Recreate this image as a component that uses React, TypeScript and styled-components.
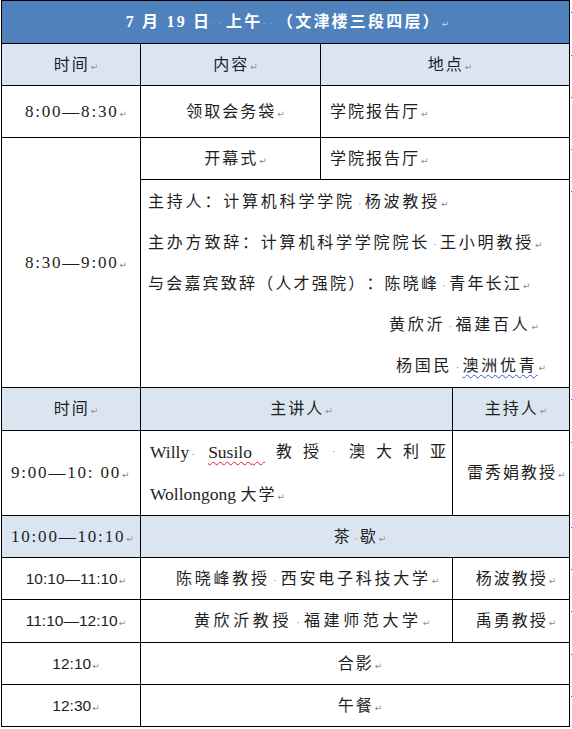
import styled, { createGlobalStyle } from 'styled-components';

const GlobalStyle = createGlobalStyle`
  html, body {
    margin: 0;
    padding: 0;
    background: #fff;
  }
  body {
    font-family: "Noto Sans CJK SC", sans-serif;
  }
`;

const Page = styled.div`
  padding-left: 1px;
`;

const Schedule = styled.table`
  width: 568px;
  table-layout: fixed;
  border-collapse: collapse;
  color: #1e1e1e;
  font-family: "Liberation Serif", "Noto Sans CJK SC", serif;
  font-size: 16px;
  letter-spacing: 2px;
  text-spacing-trim: space-all;
`;

const Row = styled.tr<{ $h: number }>`
  height: ${(p) => p.$h}px;
`;

type Tone = 'plain' | 'shade' | 'title';
type Align = 'left' | 'center' | 'right';

const tones: Record<Tone, string> = {
  plain: '#ffffff',
  shade: '#dbe5f1',
  title: '#4f81bd',
};

const Cell = styled.td<{
  $tone?: Tone;
  $align?: Align;
  $pl?: number;
  $pr?: number;
  $ls?: number;
}>`
  position: relative;
  border: 1px solid #000;
  padding: 0 ${(p) => p.$pr ?? 4}px 0 ${(p) => p.$pl ?? 14}px;
  background: ${(p) => tones[p.$tone ?? 'plain']};
  text-align: ${(p) => p.$align ?? 'center'};
  vertical-align: middle;
  white-space: nowrap;
  line-height: 20px;
  letter-spacing: ${(p) => p.$ls ?? 2}px;

  tr > &:last-child::after {
    content: '';
    position: absolute;
    right: -4px;
    top: 11px;
    width: 2px;
    height: 1px;
    background: #666;
  }
`;

const Title = styled.span`
  color: #fff;
  font-weight: bold;
  font-size: 16px;
  letter-spacing: 2.2px;
`;

const TitleGap = styled.span`
  color: #9db3d6;
  font-weight: normal;
  letter-spacing: 4px;
  font-size: 10px;
  line-height: 1;
`;

const Mark = styled.span<{ $light?: boolean }>`
  font-family: "DejaVu Sans", sans-serif;
  font-size: 9px;
  font-weight: normal;
  line-height: 1;
  letter-spacing: 0;
  color: ${(p) => (p.$light ? '#c4d2e8' : '#8c8c8c')};
  margin-left: 1px;
`;

const Dot = styled.span<{ $w?: number }>`
  display: inline-block;
  width: ${(p) => p.$w ?? 8}px;
  text-align: center;
  font-size: 10px;
  line-height: 1;
  color: #777;
  letter-spacing: 0;
`;

const Time = styled.span<{ $face?: 'serif' | 'sans' }>`
  font-family: ${(p) =>
    p.$face === 'sans' ? '"Liberation Sans", sans-serif' : '"Liberation Serif", serif'};
  font-size: ${(p) => (p.$face === 'sans' ? 15.5 : 17)}px;
  letter-spacing: ${(p) => (p.$face === 'sans' ? 0 : 1.8)}px;
`;

const Line = styled.div<{ $indent?: number; $h?: number; $ls?: number }>`
  height: ${(p) => p.$h ?? 41}px;
  line-height: ${(p) => p.$h ?? 41}px;
  padding-left: ${(p) => p.$indent ?? 0}px;
  letter-spacing: ${(p) => p.$ls ?? 2.8}px;
`;

const Spread = styled.div`
  display: flex;
  justify-content: space-between;
  align-items: center;
  height: 42px;
  letter-spacing: 0;
`;

const Latin = styled.span`
  font-family: "Liberation Serif", serif;
  font-size: 17.5px;
  letter-spacing: 0;
`;

const Squiggle = styled.span<{ $color: string }>`
  text-decoration: underline wavy ${(p) => p.$color};
  text-decoration-thickness: 1px;
  text-underline-offset: 3px;
`;

const P = ({ light }: { light?: boolean }) => <Mark $light={light}>↵</Mark>;
const S = ({ w }: { w?: number }) => <Dot $w={w}>·</Dot>;

export default function App() {
  return (
    <Page>
      <GlobalStyle />
      <Schedule>
        <colgroup>
          <col style={{ width: 139 }} />
          <col style={{ width: 180 }} />
          <col style={{ width: 132 }} />
          <col style={{ width: 117 }} />
        </colgroup>
        <tbody>
          <Row $h={43}>
            <Cell colSpan={4} $tone="title" $pl={8}>
              <Title>
                7 月 19 日<TitleGap>··</TitleGap>上午<TitleGap>··</TitleGap>（文津楼三段四层）
                <P light />
              </Title>
            </Cell>
          </Row>
          <Row $h={42}>
            <Cell $tone="shade">
              时间<P />
            </Cell>
            <Cell $tone="shade">
              内容<P />
            </Cell>
            <Cell colSpan={2} $tone="shade">
              地点<P />
            </Cell>
          </Row>
          <Row $h={52}>
            <Cell>
              <Time>8:00—8:30</Time>
              <P />
            </Cell>
            <Cell>
              领取会务袋<P />
            </Cell>
            <Cell colSpan={2} $align="left" $pl={9}>
              学院报告厅<P />
            </Cell>
          </Row>
          <Row $h={42}>
            <Cell rowSpan={2}>
              <Time>8:30—9:00</Time>
              <P />
            </Cell>
            <Cell>
              开幕式<P />
            </Cell>
            <Cell colSpan={2} $align="left" $pl={9}>
              学院报告厅<P />
            </Cell>
          </Row>
          <Row $h={208}>
            <Cell colSpan={3} $align="left" $pl={7}>
              <Line>
                主持人：计算机科学学院<S w={10} />杨波教授<P />
              </Line>
              <Line>
                主办方致辞：计算机科学学院院长<S w={10} />王小明教授<P />
              </Line>
              <Line $ls={2.2}>
                与会嘉宾致辞（人才强院）：陈晓峰<S w={10} />青年长江<P />
              </Line>
              <Line $indent={241}>
                黄欣沂<S w={10} />福建百人<P />
              </Line>
              <Line $indent={248}>
                杨国民<S w={10} />
                <Squiggle $color="#3a55d8">澳洲优青</Squiggle>
                <P />
              </Line>
            </Cell>
          </Row>
          <Row $h={43}>
            <Cell $tone="shade">
              时间<P />
            </Cell>
            <Cell colSpan={2} $tone="shade">
              主讲人<P />
            </Cell>
            <Cell $tone="shade">
              主持人<P />
            </Cell>
          </Row>
          <Row $h={84}>
            <Cell $align="left" $pl={9}>
              <Time>9:00—10: 00</Time>
              <P />
            </Cell>
            <Cell colSpan={2} $align="left" $pl={9} $pr={6}>
              <Spread>
                <Latin>
                  Willy<S />
                </Latin>
                <Latin>
                  <Squiggle $color="#e02020">Susilo{'\u00a0\u00a0\u00a0'}</Squiggle>
                </Latin>
                <span>教</span>
                <span>授</span>
                <S />
                <span>澳</span>
                <span>大</span>
                <span>利</span>
                <span>亚</span>
              </Spread>
              <Line $h={42} $ls={2}>
                <Latin>Wollongong </Latin>大学<P />
              </Line>
            </Cell>
            <Cell>
              雷秀娟教授<P />
            </Cell>
          </Row>
          <Row $h={42}>
            <Cell $tone="shade" $align="left" $pl={9}>
              <Time>10:00—10:10</Time>
              <P />
            </Cell>
            <Cell colSpan={3} $tone="shade">
              茶<S />歇<P />
            </Cell>
          </Row>
          <Row $h={42}>
            <Cell>
              <Time $face="sans">10:10—11:10</Time>
              <P />
            </Cell>
            <Cell colSpan={2} $align="left" $pl={35} $ls={2.75}>
              陈晓峰教授<S w={11} />西安电子科技大学<P />
            </Cell>
            <Cell>
              杨波教授<P />
            </Cell>
          </Row>
          <Row $h={43}>
            <Cell>
              <Time $face="sans">11:10—12:10</Time>
              <P />
            </Cell>
            <Cell colSpan={2} $align="left" $pl={53} $ls={3.6}>
              黄欣沂教授<S w={12} />福建师范大学<P />
            </Cell>
            <Cell>
              禹勇教授<P />
            </Cell>
          </Row>
          <Row $h={42}>
            <Cell>
              <Time $face="sans">12:10</Time>
              <P />
            </Cell>
            <Cell colSpan={3}>
              合影<P />
            </Cell>
          </Row>
          <Row $h={42}>
            <Cell>
              <Time $face="sans">12:30</Time>
              <P />
            </Cell>
            <Cell colSpan={3}>
              午餐<P />
            </Cell>
          </Row>
        </tbody>
      </Schedule>
    </Page>
  );
}
